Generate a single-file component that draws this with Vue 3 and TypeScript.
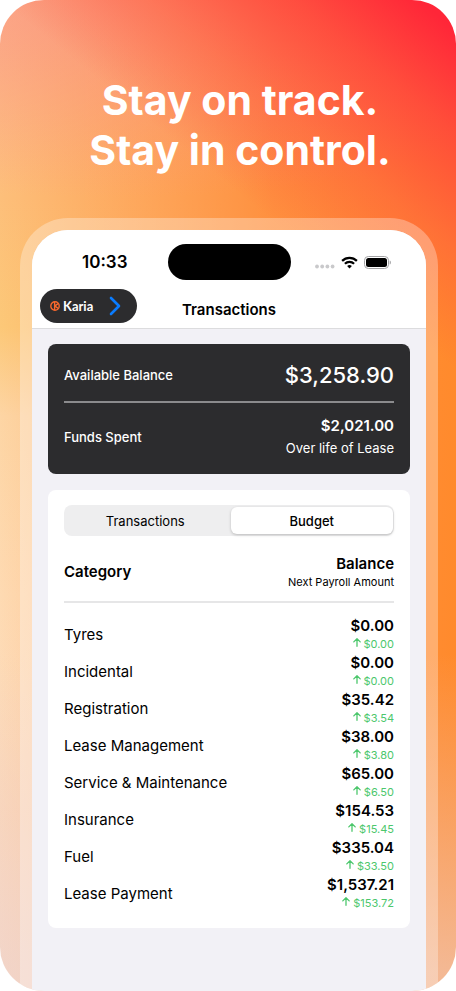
<script setup lang="ts">
import { ref } from 'vue'

interface BudgetLine {
  category: string
  balance: string
  next: string
}

const lines: BudgetLine[] = [
  { category: 'Tyres', balance: '$0.00', next: '$0.00' },
  { category: 'Incidental', balance: '$0.00', next: '$0.00' },
  { category: 'Registration', balance: '$35.42', next: '$3.54' },
  { category: 'Lease Management', balance: '$38.00', next: '$3.80' },
  { category: 'Service & Maintenance', balance: '$65.00', next: '$6.50' },
  { category: 'Insurance', balance: '$154.53', next: '$15.45' },
  { category: 'Fuel', balance: '$335.04', next: '$33.50' },
  { category: 'Lease Payment', balance: '$1,537.21', next: '$153.72' },
]

const tabs = ['Transactions', 'Budget']
const active = ref('Budget')
</script>

<template>
  <main class="poster">
    <h1 class="headline">Stay on track.<br />Stay in control.</h1>

    <div class="phone">
      <div class="screen">
        <header class="top">
          <div class="status">
            <span class="time">10:33</span>
            <span class="island"></span>
            <span class="indicators">
              <svg width="20" height="5" viewBox="0 0 20 5" fill="#c9c9cb">
                <circle cx="2" cy="2.5" r="1.9" /><circle cx="7.2" cy="2.5" r="1.9" />
                <circle cx="12.4" cy="2.5" r="1.9" /><circle cx="17.6" cy="2.5" r="1.9" />
              </svg>
              <svg class="wifi" width="17" height="13" viewBox="0 0 17 13" fill="none" stroke="#000" stroke-width="2.2">
                <path d="M1.1 4.9a10.5 10.5 0 0 1 14.8 0" />
                <path d="M3.9 7.8a6.5 6.5 0 0 1 9.2 0" />
                <path d="M8.5 12.5 6.1 10.1a3.4 3.4 0 0 1 4.8 0Z" fill="#000" stroke="none" />
              </svg>
              <svg width="27" height="13" viewBox="0 0 27 13">
                <rect x=".5" y=".5" width="24" height="12" rx="3.8" fill="none" stroke="#a3a3a5" />
                <rect x="2" y="2" width="21" height="9" rx="2.5" fill="#000" />
                <path d="M25.7 4.5v4c.8-.3 1.2-1.1 1.2-2s-.4-1.7-1.2-2Z" fill="#a3a3a5" />
              </svg>
            </span>
          </div>
          <nav class="bar">
            <button class="brand" type="button" aria-label="Karia">
              <svg width="10" height="10" viewBox="0 0 10 10" fill="none" stroke="#f8682d" stroke-width="1.4">
                <circle cx="5" cy="5" r="4.2" />
                <path d="M4.6.8v8.4M8 2.6 5 5l3 2.4" />
              </svg>
              <span class="brand-name">Karia</span>
              <svg class="chevron" width="12" height="20" viewBox="0 0 12 20" fill="none" stroke="#0a7cff" stroke-width="2.6" stroke-linecap="round" stroke-linejoin="round">
                <path d="m2 2 8 8-8 8" />
              </svg>
            </button>
            <h2 class="title">Transactions</h2>
          </nav>
        </header>

        <div class="content">
          <section class="summary">
            <div class="available">
              <span>Available Balance</span>
              <strong class="total">$3,258.90</strong>
            </div>
            <div class="spent">
              <span>Funds Spent</span>
              <div class="spent-value">
                <strong>$2,021.00</strong>
                <small>Over life of Lease</small>
              </div>
            </div>
          </section>

          <section class="card">
            <div class="segments">
              <button
                v-for="tab in tabs"
                :key="tab"
                type="button"
                :class="['segment', { selected: tab === active }]"
                :aria-pressed="tab === active"
                @click="active = tab"
              >{{ tab }}</button>
            </div>

            <table class="budget">
              <thead>
                <tr>
                  <th class="category-head" scope="col">Category</th>
                  <th class="balance-head" scope="col">Balance<small>Next Payroll Amount</small></th>
                </tr>
              </thead>
              <tbody>
                <tr v-for="line in lines" :key="line.category">
                  <td class="category">{{ line.category }}</td>
                  <td class="amounts">
                    <strong>{{ line.balance }}</strong>
                    <span class="next">
                      <svg width="8" height="9" viewBox="0 0 8 9" fill="none" stroke="#4cc76c" stroke-width="1.3" stroke-linecap="round" stroke-linejoin="round">
                        <path d="M4 8.3V.8M.8 3.9 4 .8l3.2 3.1" />
                      </svg>{{ line.next }}
                    </span>
                  </td>
                </tr>
              </tbody>
            </table>
          </section>
        </div>
      </div>
    </div>
  </main>
</template>

<style>
body {
  background: #fff;
}
</style>

<style scoped>
.poster {
  box-sizing: border-box;
  display: flex;
  flex-direction: column;
  min-height: 100vh;
  padding: 75px 18px 0 20px;
  overflow: hidden;
  border-radius: 44px;
  font-family: Inter, "Liberation Sans", sans-serif;
  color: #000;
  background:
    linear-gradient(to bottom, rgba(240, 200, 190, 0) 66%, rgba(240, 200, 186, 0.36) 82%, rgba(238, 208, 200, 0.66) 98%),
    linear-gradient(to top right, rgba(255, 100, 60, 0) 50%, rgba(255, 88, 62, 0.5) 66%, rgba(255, 66, 58, 0.84) 82%, #ff2638 96%) top / 100% 370px no-repeat,
    radial-gradient(ellipse 120% 20% at 25% 0%, rgba(250, 140, 130, 0.65) 0%, rgba(250, 150, 130, 0) 100%),
    linear-gradient(to right, rgba(255, 130, 40, 0) 0%, rgba(255, 132, 48, 0.8) 60%, #ff8a2c 100%),
    linear-gradient(to bottom, #fdc08c 0%, #fdbf7a 20%, #fcc878 33%, #fdd5a4 42%, #fedab2 60%, #fadfcb 100%);
}

.headline {
  margin: 0 0 43px;
  padding-left: 22px;
  color: #fff;
  font-size: 41px;
  font-weight: 700;
  line-height: 50px;
  text-align: center;
}

.phone {
  display: flex;
  flex: 1;
  padding: 12px 12px 0;
  border-radius: 48px 48px 0 0;
  background: rgba(255, 255, 255, 0.3);
}

.screen {
  flex: 1;
  min-width: 0;
  overflow: hidden;
  border-radius: 36px 36px 0 0;
  background: #f2f1f6;
}

.top {
  border-bottom: 1px solid #dcdcde;
  background: #fff;
}

.status {
  display: grid;
  grid-template-columns: 1fr 123px 1fr;
  align-items: center;
  padding-top: 14px;
}

.time {
  padding-left: 10px;
  font-size: 17px;
  font-weight: 600;
  text-align: center;
}

.island {
  height: 36px;
  border-radius: 18px;
  background: #000;
}

.indicators {
  display: flex;
  align-items: center;
  justify-content: center;
  gap: 6px;
  padding-right: 10px;
}

.indicators svg:first-child {
  margin-top: 8px;
}

.bar {
  display: grid;
  grid-template-columns: 1fr auto 1fr;
  align-items: center;
  padding: 9px 8px 5px;
}

.brand {
  display: flex;
  align-items: center;
  justify-self: start;
  width: 97px;
  height: 34px;
  padding: 0 16px 0 10px;
  border: 0;
  border-radius: 17px;
  background: #2c2c2e;
  color: #fff;
}

.brand-name {
  margin-left: 3px;
  font-family: Lato, sans-serif;
  font-size: 13px;
  font-weight: 700;
}

.chevron {
  margin-left: auto;
}

.title {
  margin: 8px 0 0;
  font-size: 15px;
  font-weight: 600;
  line-height: 20px;
}

.content {
  display: flex;
  flex-direction: column;
  gap: 16px;
  padding: 15px 16px 62px;
}

.summary {
  padding: 0 16px;
  border-radius: 8px;
  background: #2c2c2e;
  color: #fff;
  font-size: 13px;
  font-weight: 500;
}

.available,
.spent {
  display: flex;
  align-items: center;
  justify-content: space-between;
}

.available {
  height: 53px;
  padding-top: 4px;
  border-bottom: 2px solid #8b8b8d;
}

.spent {
  height: 68px;
  padding-bottom: 3px;
}

.total {
  font-size: 22px;
  font-weight: 500;
}

.spent-value {
  display: flex;
  flex-direction: column;
  align-items: flex-end;
  line-height: 22px;
}

.spent-value strong {
  font-size: 15px;
  font-weight: 600;
}

.spent-value small {
  font-size: 13px;
  font-weight: 400;
}

.card {
  padding: 15px 16px 16px;
  border-radius: 8px;
  background: #fff;
}

.segments {
  display: grid;
  grid-template-columns: 1fr 1fr;
  gap: 4px;
  padding: 2px 1px 2px 0;
  border-radius: 8px;
  background: #eeeeef;
}

.segment {
  height: 27px;
  padding: 0;
  border: 0;
  border-radius: 6px;
  background: transparent;
  color: #000;
  font-family: inherit;
  font-size: 13px;
}

.selected {
  background: #fff;
  box-shadow: 0 1px 3px rgba(0, 0, 0, 0.22);
  font-weight: 500;
}

.budget {
  width: 100%;
  border-collapse: collapse;
}

.budget th {
  height: 58px;
  padding: 7px 0 0;
  border-bottom: 2px solid #e6e6e7;
  font-size: 15px;
  font-weight: 600;
  line-height: 20px;
}

.category-head {
  text-align: left;
}

.balance-head {
  text-align: right;
}

.balance-head small {
  display: block;
  font-size: 11px;
  font-weight: 400;
  line-height: 16px;
}

.budget td {
  height: 37px;
  padding: 0;
}

.budget tbody tr:first-child td {
  padding-top: 13px;
}

.category {
  font-size: 15px;
}

.amounts {
  text-align: right;
}

.amounts strong {
  display: block;
  font-size: 15px;
  font-weight: 600;
  line-height: 20px;
}

.next {
  display: flex;
  justify-content: flex-end;
  gap: 3px;
  color: #4cc76c;
  font-size: 11px;
  line-height: 17px;
}

.next svg {
  margin-top: 2px;
}
</style>
